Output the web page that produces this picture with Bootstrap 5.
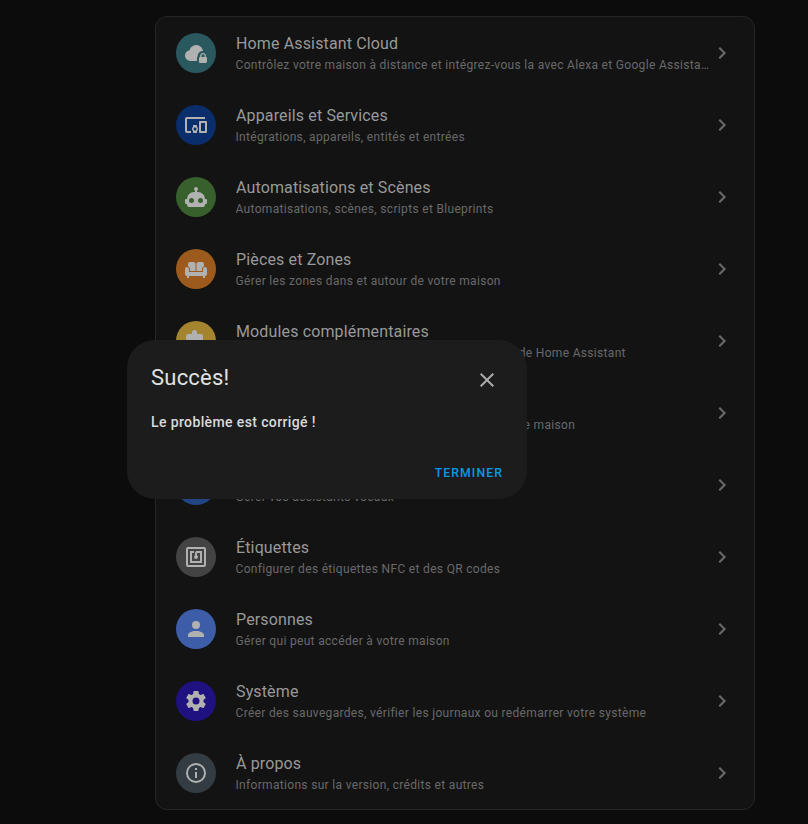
<!DOCTYPE html>
<html lang="fr" data-bs-theme="dark">
<head>
<meta charset="utf-8">
<meta name="viewport" content="width=device-width, initial-scale=1">
<title>Paramètres</title>
<link href="https://cdn.jsdelivr.net/npm/bootstrap@5.3.0/dist/css/bootstrap.min.css" rel="stylesheet">
<style>
body{background:#0c0c0c;font-family:Roboto,sans-serif;height:824px;overflow:hidden}
svg{width:24px;height:24px;fill:currentColor;flex:none;display:block}
.settings{width:600px;margin-left:155px;margin-top:16px;background:#131313;border:1px solid #262626;border-radius:12px;overflow:hidden;--bs-list-group-bg:transparent}
.settings .list-group-item{height:72px;padding:0 20px;background:transparent;border:0}
.disc{width:40px;height:40px;color:#b1b1b1;flex:none}
.label-col{margin-left:20px;margin-right:-2px;width:476px}
.title-line{font-size:16px;line-height:20px;color:#999;letter-spacing:.14px;margin-top:2px}
.desc-line{font-size:12px;line-height:20px;color:#696969;letter-spacing:.32px;margin-top:1px;margin-left:-.5px}
.go{color:#6b6b6b}
.c-cloud{background:#29595f}.c-dev{background:#092e6b}.c-auto{background:#37602d}.c-area{background:#9c5a1c}
.c-addon{background:#a4842f}.c-dash{background:#5f2f74}.c-voice{background:#224584}.c-tag{background:#434343}
.c-person{background:#3d5da9}.c-sys{background:#201181}.c-about{background:#323c42}
.dialog-box{left:127px;top:340px;width:400px;height:159px;border:0;border-radius:28px;background:#1c1c1c;padding:24px 24px 18px}
.dialog-title{font-size:22px;line-height:28px;color:#e1e1e1;font-weight:400;letter-spacing:.22px}
.dialog-text{font-size:14px;line-height:20px;color:#dadada;font-weight:500;letter-spacing:.38px}
.dismiss{color:#aaa;padding:0;margin:4px 4px 0 0}
.done{font-size:12.25px;line-height:16px;color:#039be5;font-weight:500;letter-spacing:1.09px;padding:0}
</style>
<script src="https://cdn.jsdelivr.net/npm/bootstrap@5.3.0/dist/js/bootstrap.bundle.min.js"></script>
</head>
<body class="position-relative">
<svg class="d-none"><defs><path id="chev" d="M8.59 16.58L13.17 12L8.59 7.41L10 6L16 12L10 18L8.59 16.58Z"/></defs></svg>
<main class="overflow-hidden">
<div class="list-group list-group-flush settings">
<a class="list-group-item d-flex align-items-center"><span class="disc c-cloud rounded-circle d-flex align-items-center justify-content-center"><svg viewBox="0 0 24 24"><path d="M13 20H6.5C3.5 20 1 17.6 1 14.6C1 11.9 2.9 9.6 5.5 9.2C6.4 6.1 9 4 12 4C15.6 4 18.6 6.6 19 10C16.1 10 13.8 12 13.8 14.6V15C13.3 15.5 13 16.3 13 17V20Z"/><path fill-rule="evenodd" d="M21.8 16V14.5C21.8 13.1 20.4 12 19 12S16.2 13.1 16.2 14.5V16C15.6 16 15 16.6 15 17.2V20.7C15 21.4 15.6 22 16.2 22H21.7C22.4 22 23 21.4 23 20.8V17.3C23 16.6 22.4 16 21.8 16M20.5 16H17.5V14.5C17.5 13.7 18.2 13.2 19 13.2S20.5 13.7 20.5 14.5V16Z"/></svg></span><div class="label-col"><div class="title-line text-truncate">Home Assistant Cloud</div><div class="desc-line text-truncate">Contrôlez votre maison à distance et intégrez-vous la avec Alexa et Google Assistant</div></div><svg class="go" viewBox="0 0 24 24"><use href="#chev"/></svg></a>
<a class="list-group-item d-flex align-items-center"><span class="disc c-dev rounded-circle d-flex align-items-center justify-content-center"><svg viewBox="0 0 24 24"><path d="M3 6H21V4H3C1.9 4 1 4.9 1 6V18C1 19.1 1.9 20 3 20H7V18H3V6M13 12H9V13.78C8.39 14.33 8 15.11 8 16C8 16.89 8.39 17.67 9 18.22V20H13V18.22C13.61 17.67 14 16.88 14 16S13.61 14.33 13 13.78V12M11 17.5C10.17 17.5 9.5 16.83 9.5 16S10.17 14.5 11 14.5 12.5 15.17 12.5 16 11.83 17.5 11 17.5M22 8H16C15.5 8 15 8.5 15 9V19C15 19.5 15.5 20 16 20H22C22.5 20 23 19.5 23 19V9C23 8.5 22.5 8 22 8M21 18H17V10H21V18Z" fill-rule="evenodd"/></svg></span><div class="label-col"><div class="title-line text-truncate">Appareils et Services</div><div class="desc-line text-truncate">Intégrations, appareils, entités et entrées</div></div><svg class="go" viewBox="0 0 24 24"><use href="#chev"/></svg></a>
<a class="list-group-item d-flex align-items-center"><span class="disc c-auto rounded-circle d-flex align-items-center justify-content-center"><svg viewBox="0 0 24 24"><path fill-rule="evenodd" d="M12 2A2 2 0 0 1 14 4C14 4.74 13.6 5.39 13 5.73V7H14A7 7 0 0 1 21 14H22A1 1 0 0 1 23 15V18A1 1 0 0 1 22 19H21V20A2 2 0 0 1 19 22H5A2 2 0 0 1 3 20V19H2A1 1 0 0 1 1 18V15A1 1 0 0 1 2 14H3A7 7 0 0 1 10 7H11V5.73C10.4 5.39 10 4.74 10 4A2 2 0 0 1 12 2M7.5 13A2.5 2.5 0 1 0 7.5 18A2.5 2.5 0 1 0 7.5 13M16.5 13A2.5 2.5 0 1 0 16.5 18A2.5 2.5 0 1 0 16.5 13Z"/></svg></span><div class="label-col"><div class="title-line text-truncate">Automatisations et Scènes</div><div class="desc-line text-truncate">Automatisations, scènes, scripts et Blueprints</div></div><svg class="go" viewBox="0 0 24 24"><use href="#chev"/></svg></a>
<a class="list-group-item d-flex align-items-center"><span class="disc c-area rounded-circle d-flex align-items-center justify-content-center"><svg viewBox="0 0 24 24"><path d="M12.5 7C12.5 5.89 13.39 5 14.5 5H18C19.1 5 20 5.9 20 7V9.16C18.84 9.57 18 10.67 18 11.97V14H12.5V7M6 11.96V14H11.5V7C11.5 5.89 10.61 5 9.5 5H6C4.9 5 4 5.9 4 7V9.15C5.16 9.56 6 10.67 6 11.96M20.66 10.03C19.68 10.19 19 11.12 19 12.12V15H5V12C5 10.9 4.11 10 3 10S1 10.9 1 12V17C1 18.1 1.9 19 3 19V21H5V19H19V21H21V19C22.1 19 23 18.1 23 17V12C23 10.79 21.91 9.82 20.66 10.03Z"/></svg></span><div class="label-col"><div class="title-line text-truncate">Pièces et Zones</div><div class="desc-line text-truncate">Gérer les zones dans et autour de votre maison</div></div><svg class="go" viewBox="0 0 24 24"><use href="#chev"/></svg></a>
<a class="list-group-item d-flex align-items-center"><span class="disc c-addon rounded-circle d-flex align-items-center justify-content-center"><svg viewBox="0 0 24 24"><path d="M20.5,11H19V7C19,5.89 18.1,5 17,5H13V3.5A2.5,2.5 0 0,0 10.5,1A2.5,2.5 0 0,0 8,3.5V5H4A2,2 0 0,0 2,7V10.8H3.5C5,10.8 6.2,12 6.2,13.5C6.2,15 5,16.2 3.5,16.2H2V20A2,2 0 0,0 4,22H7.8V20.5C7.8,19 9,17.8 10.5,17.8C12,17.8 13.2,19 13.2,20.5V22H17A2,2 0 0,0 19,20V16H20.5A2.5,2.5 0 0,0 23,13.5A2.5,2.5 0 0,0 20.5,11Z"/></svg></span><div class="label-col"><div class="title-line text-truncate">Modules complémentaires</div><div class="desc-line text-truncate">Exécuter des applications supplémentaires à côté de Home Assistant</div></div><svg class="go" viewBox="0 0 24 24"><use href="#chev"/></svg></a>
<a class="list-group-item d-flex align-items-center"><span class="disc c-dash rounded-circle d-flex align-items-center justify-content-center"><svg viewBox="0 0 24 24"><path d="M13 3V9H21V3M13 21H21V11H13M3 21H11V15H3M3 13H11V3H3V13Z"/></svg></span><div class="label-col"><div class="title-line text-truncate">Tableaux de bord</div><div class="desc-line text-truncate">Organiser la façon dont vous interagissez avec votre maison</div></div><svg class="go" viewBox="0 0 24 24"><use href="#chev"/></svg></a>
<a class="list-group-item d-flex align-items-center"><span class="disc c-voice rounded-circle d-flex align-items-center justify-content-center"><svg viewBox="0 0 24 24"><path d="M12 2A3 3 0 0 1 15 5V11A3 3 0 0 1 9 11V5A3 3 0 0 1 12 2M19 11C19 14.5 16.4 17.4 13 17.9V21H11V17.9C7.6 17.4 5 14.5 5 11H7A5 5 0 0 0 17 11Z"/></svg></span><div class="label-col"><div class="title-line text-truncate">Assistants vocaux</div><div class="desc-line text-truncate">Gérer vos assistants vocaux</div></div><svg class="go" viewBox="0 0 24 24"><use href="#chev"/></svg></a>
<a class="list-group-item d-flex align-items-center"><span class="disc c-tag rounded-circle d-flex align-items-center justify-content-center"><svg viewBox="0 0 24 24"><path d="M18,6H13A2,2 0 0,0 11,8V10.28C10.41,10.62 10,11.26 10,12A2,2 0 0,0 12,14C13.11,14 14,13.1 14,12C14,11.26 13.6,10.62 13,10.28V8H16V16H8V8H10V6H8L6,6V18H18M20,20H4V4H20M20,2H4A2,2 0 0,0 2,4V20A2,2 0 0,0 4,22H20C21.11,22 22,21.1 22,20V4C22,2.89 21.11,2 20,2Z"/></svg></span><div class="label-col"><div class="title-line text-truncate">Étiquettes</div><div class="desc-line text-truncate">Configurer des étiquettes NFC et des QR codes</div></div><svg class="go" viewBox="0 0 24 24"><use href="#chev"/></svg></a>
<a class="list-group-item d-flex align-items-center"><span class="disc c-person rounded-circle d-flex align-items-center justify-content-center"><svg viewBox="0 0 24 24"><path d="M12,4A4,4 0 0,1 16,8A4,4 0 0,1 12,12A4,4 0 0,1 8,8A4,4 0 0,1 12,4M12,14C16.42,14 20,15.79 20,18V20H4V18C4,15.79 7.58,14 12,14Z"/></svg></span><div class="label-col"><div class="title-line text-truncate">Personnes</div><div class="desc-line text-truncate">Gérer qui peut accéder à votre maison</div></div><svg class="go" viewBox="0 0 24 24"><use href="#chev"/></svg></a>
<a class="list-group-item d-flex align-items-center"><span class="disc c-sys rounded-circle d-flex align-items-center justify-content-center"><svg viewBox="0 0 24 24"><path d="M12,15.5A3.5,3.5 0 0,1 8.5,12A3.5,3.5 0 0,1 12,8.5A3.5,3.5 0 0,1 15.5,12A3.5,3.5 0 0,1 12,15.5M19.43,12.97C19.47,12.65 19.5,12.33 19.5,12C19.5,11.67 19.47,11.34 19.43,11L21.54,9.37C21.73,9.22 21.78,8.95 21.66,8.73L19.66,5.27C19.54,5.05 19.27,4.96 19.05,5.05L16.56,6.05C16.04,5.66 15.5,5.32 14.87,5.07L14.5,2.42C14.46,2.18 14.25,2 14,2H10C9.75,2 9.54,2.18 9.5,2.42L9.13,5.07C8.5,5.32 7.96,5.66 7.44,6.05L4.95,5.05C4.73,4.96 4.46,5.05 4.34,5.27L2.34,8.73C2.21,8.95 2.27,9.22 2.46,9.37L4.57,11C4.53,11.34 4.5,11.67 4.5,12C4.5,12.33 4.53,12.65 4.57,12.97L2.46,14.63C2.27,14.78 2.21,15.05 2.34,15.27L4.34,18.73C4.46,18.95 4.73,19.03 4.95,18.95L7.44,17.94C7.96,18.34 8.5,18.68 9.13,18.93L9.5,21.58C9.54,21.82 9.75,22 10,22H14C14.25,22 14.46,21.82 14.5,21.58L14.87,18.93C15.5,18.67 16.04,18.34 16.56,17.94L19.05,18.95C19.27,19.03 19.54,18.95 19.66,18.73L21.66,15.27C21.78,15.05 21.73,14.78 21.54,14.63L19.43,12.97Z"/></svg></span><div class="label-col"><div class="title-line text-truncate">Système</div><div class="desc-line text-truncate">Créer des sauvegardes, vérifier les journaux ou redémarrer votre système</div></div><svg class="go" viewBox="0 0 24 24"><use href="#chev"/></svg></a>
<a class="list-group-item d-flex align-items-center"><span class="disc c-about rounded-circle d-flex align-items-center justify-content-center"><svg viewBox="0 0 24 24"><path d="M11,9H13V7H11M12,20C7.59,20 4,16.41 4,12C4,7.59 7.59,4 12,4C16.41,4 20,7.59 20,12C20,16.41 16.41,20 12,20M12,2A10,10 0 0,0 2,12A10,10 0 0,0 12,22A10,10 0 0,0 22,12A10,10 0 0,0 12,2M11,17H13V11H11V17Z"/></svg></span><div class="label-col"><div class="title-line text-truncate">À propos</div><div class="desc-line text-truncate">Informations sur la version, crédits et autres</div></div><svg class="go" viewBox="0 0 24 24"><use href="#chev"/></svg></a>
</div>
</main>
<div class="modal-content dialog-box position-absolute d-flex flex-column" role="dialog">
<div class="d-flex justify-content-between align-items-start"><h2 class="dialog-title m-0">Succès!</h2><button class="btn border-0 dismiss" aria-label="Fermer"><svg viewBox="0 0 24 24"><path d="M19,6.41L17.59,5L12,10.59L6.41,5L5,6.41L10.59,12L5,17.59L6.41,19L12,13.41L17.59,19L19,17.59L13.41,12L19,6.41Z"/></svg></button></div>
<div class="dialog-text mt-3 pt-1">Le problème est corrigé !</div>
<div class="d-flex justify-content-end mt-auto"><button class="btn border-0 done text-uppercase">Terminer</button></div>
</div>
</body>
</html>
